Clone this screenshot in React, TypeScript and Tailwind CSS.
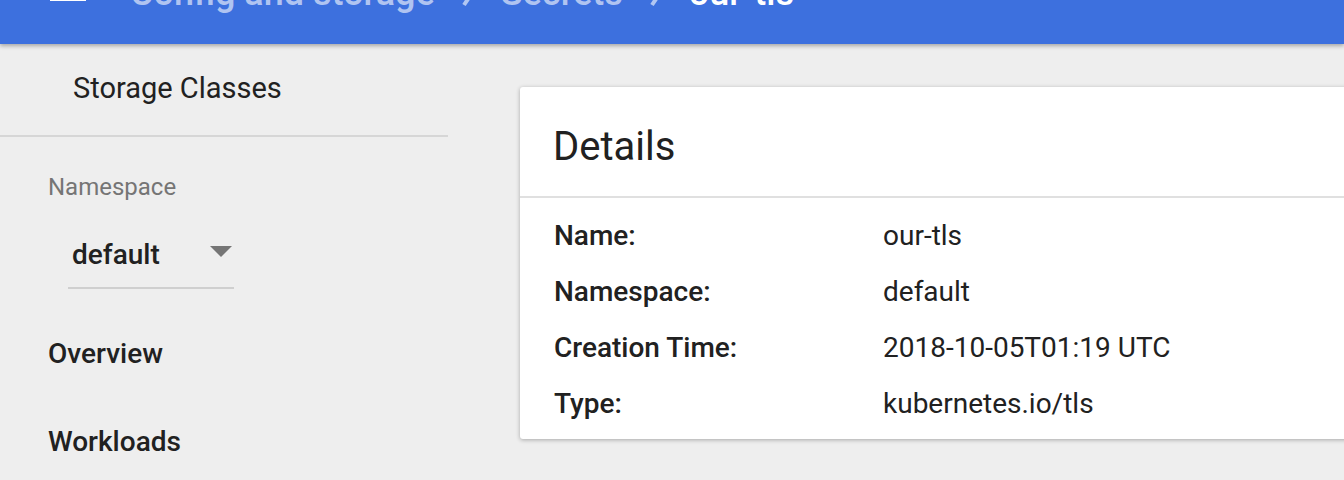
import React from "react";

const font = { fontFamily: "Roboto, 'Noto Sans', Arial, sans-serif" };

function Chevron() {
  return (
    <svg width="14" height="36" viewBox="0 0 14 36" className="mx-[26px] shrink-0">
      <path d="M3 6 L11 18 L3 30" fill="none" stroke="rgba(255,255,255,0.6)" strokeWidth="4" />
    </svg>
  );
}

function Toolbar() {
  return (
    <header className="relative z-10 h-[44px] bg-[#3d70de] shadow-[0_2px_4px_rgba(0,0,0,0.3)] overflow-hidden flex items-end pb-[33px]">
      <svg width="36" height="24" viewBox="0 0 36 24" className="ml-[50px] mb-[10px] shrink-0">
        <rect x="0" y="0" width="36" height="4" fill="#fff" />
        <rect x="0" y="10" width="36" height="4" fill="#fff" />
        <rect x="0" y="20" width="36" height="4" fill="#fff" />
      </svg>
      <nav className="ml-[44px] flex items-end text-[36px] leading-[36px] font-medium whitespace-nowrap">
        <span className="text-white/60">Config and storage</span>
        <Chevron />
        <span className="text-white/60">Secrets</span>
        <Chevron />
        <span className="text-white">our-tls</span>
      </nav>
    </header>
  );
}

function Sidebar() {
  return (
    <aside className="w-[448px] shrink-0 text-[#212121]">
      <div className="pl-[73px] pt-[16px] text-[29px] leading-[56px]">Storage Classes</div>
      <div className="mt-[19px] h-[2px] bg-[#d6d6d6]" />
      <div className="pl-[48px] pt-[36px] text-[24px] leading-[28px] text-[#757575]">Namespace</div>
      <div className="ml-[68px] mt-[36px] w-[166px] border-b-2 border-[#cfcfcf] pb-[14px] flex items-center">
        <span className="pl-[4px] text-[28px] leading-[36px] font-medium">default</span>
        <svg width="22" height="11" viewBox="0 0 22 11" className="ml-auto mr-[2px] -mt-[8px]">
          <path d="M0 0 H22 L11 11 Z" fill="#757575" />
        </svg>
      </div>
      <div className="pl-[48px] mt-[45px] text-[28px] leading-[40px] font-medium">Overview</div>
      <div className="pl-[48px] mt-[48px] text-[28px] leading-[40px] font-medium">Workloads</div>
    </aside>
  );
}

const rows: [string, string][] = [
  ["Name:", "our-tls"],
  ["Namespace:", "default"],
  ["Creation Time:", "2018-10-05T01:19 UTC"],
  ["Type:", "kubernetes.io/tls"],
];

function DetailsCard() {
  return (
    <section className="mt-[43px] ml-[72px] w-[900px] shrink-0 self-start bg-white rounded-[3px] shadow-[0_1px_4px_rgba(0,0,0,0.3)] text-[#212121]">
      <div className="h-[111px] pt-[10px] flex items-center px-[33px] border-b-2 border-[#e0e0e0]">
        <h2 className="text-[40px] leading-[48px] font-normal">Details</h2>
      </div>
      <div className="pt-[10px] pb-[7px] px-[34px]">
        {rows.map(([k, v]) => (
          <div key={k} className="flex text-[28px] leading-[56px]">
            <span className="w-[329px] font-medium">{k}</span>
            <span>{v}</span>
          </div>
        ))}
      </div>
    </section>
  );
}

export default function App() {
  return (
    <div className="w-[1344px] h-[480px] overflow-hidden bg-[#eeeeee]" style={font}>
      <Toolbar />
      <main className="flex">
        <Sidebar />
        <DetailsCard />
      </main>
    </div>
  );
}
